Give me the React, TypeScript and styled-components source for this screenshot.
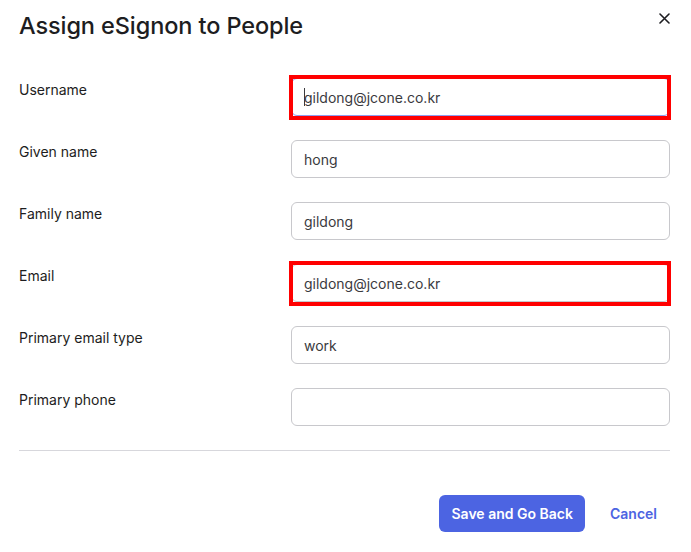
import React from "react";
import styled, { createGlobalStyle } from "styled-components";

const Global = createGlobalStyle`
  html, body { margin: 0; padding: 0; background: #ffffff; }
  body { font-family: Inter, "Noto Sans", "Liberation Sans", sans-serif; color: #1d1d21; }
  * { box-sizing: border-box; }
`;

const Dialog = styled.div`
  width: 691px;
  height: 552px;
  padding: 12px 21px 20px 19px;
  display: flex;
  flex-direction: column;
`;

const Header = styled.div`
  display: flex;
  align-items: flex-start;
  justify-content: space-between;
`;

const Title = styled.h1`
  margin: 0;
  font-size: 23.5px;
  line-height: 28px;
  font-weight: 500;
  color: #1d1d21;
  letter-spacing: -0.1px;
`;

const CloseButton = styled.button`
  border: none;
  background: none;
  padding: 0;
  margin: -1px -1px 0 0;
  width: 14px;
  height: 14px;
  display: flex;
  align-items: center;
  justify-content: center;
  cursor: pointer;
`;

const Form = styled.div`
  margin-top: 38px;
  display: grid;
  grid-template-columns: 272px 1fr;
  row-gap: 24px;
`;

const Label = styled.label`
  font-size: 14px;
  line-height: 20px;
  padding-top: 2px;
  color: #1d1d21;
`;

const FieldWrap = styled.div`
  position: relative;
`;

const Input = styled.input<{ $focused?: boolean }>`
  width: 100%;
  height: 38px;
  border: 1px solid ${(p) => (p.$focused ? "#8d9df0" : "#c8c8cc")};
  border-radius: 6px;
  padding: 0 12px;
  font-family: Inter, "Noto Sans", "Liberation Sans", sans-serif;
  font-size: 14px;
  color: #3a3a3e;
  background: #fff;
  outline: none;
  display: block;
`;

const Caret = styled.span`
  position: absolute;
  left: 13px;
  top: 10px;
  width: 1px;
  height: 18px;
  background: #3a3a3e;
`;

const Highlight = styled.span`
  position: absolute;
  left: -2px;
  right: -1px;
  top: -3px;
  bottom: -4px;
  border: 4px solid #ff0000;
  pointer-events: none;
`;

const Divider = styled.hr`
  margin: 24px 0 0 0;
  border: none;
  border-top: 1px solid #d7d7dc;
`;

const Footer = styled.div`
  margin-top: 44px;
  display: flex;
  justify-content: flex-end;
  gap: 12px;
`;

const PrimaryButton = styled.button`
  height: 37px;
  padding: 0 12px;
  border: none;
  border-radius: 6px;
  background: #4c64e2;
  color: #ffffff;
  font-family: Inter, "Noto Sans", "Liberation Sans", sans-serif;
  font-size: 14px;
  font-weight: 600;
  cursor: pointer;
`;

const LinkButton = styled.button`
  height: 37px;
  padding: 0 13px;
  border: none;
  background: none;
  color: #4c64e2;
  font-family: Inter, "Noto Sans", "Liberation Sans", sans-serif;
  font-size: 14px;
  font-weight: 600;
  cursor: pointer;
`;

type Field = { label: string; value: string; highlight?: boolean; focused?: boolean };

const fields: Field[] = [
  { label: "Username", value: "gildong@jcone.co.kr", highlight: true, focused: true },
  { label: "Given name", value: "hong" },
  { label: "Family name", value: "gildong" },
  { label: "Email", value: "gildong@jcone.co.kr", highlight: true },
  { label: "Primary email type", value: "work" },
  { label: "Primary phone", value: "" },
];

export default function App() {
  return (
    <>
      <Global />
      <Dialog>
        <Header>
          <Title>Assign eSignon to People</Title>
          <CloseButton aria-label="Close">
            <svg width="11" height="11" viewBox="0 0 11 11">
              <path d="M1 1 L10 10 M10 1 L1 10" stroke="#1d1d21" strokeWidth="1.6" strokeLinecap="round" />
            </svg>
          </CloseButton>
        </Header>
        <Form>
          {fields.map((f) => (
            <React.Fragment key={f.label}>
              <Label>{f.label}</Label>
              <FieldWrap>
                <Input $focused={f.focused} value={f.value} readOnly />
                {f.focused && <Caret />}
                {f.highlight && <Highlight />}
              </FieldWrap>
            </React.Fragment>
          ))}
        </Form>
        <Divider />
        <Footer>
          <PrimaryButton>Save and Go Back</PrimaryButton>
          <LinkButton>Cancel</LinkButton>
        </Footer>
      </Dialog>
    </>
  );
}
